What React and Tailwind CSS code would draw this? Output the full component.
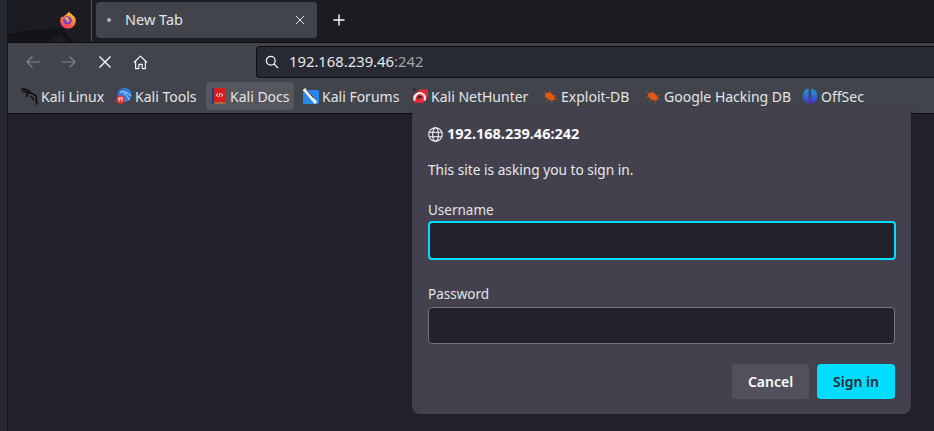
import React from "react";

const font = { fontFamily: '"Noto Sans", sans-serif' };

function Globe() {
  return (
    <svg width="15" height="15" viewBox="0 0 16 16" fill="none" stroke="#fbfbfe" strokeWidth="1.1">
      <circle cx="8" cy="8" r="7.2" />
      <ellipse cx="8" cy="8" rx="3" ry="7.2" />
      <path d="M1.3 5.6h13.4M1.3 10.4h13.4" />
    </svg>
  );
}

function Firefox() {
  return (
    <svg width="16" height="18" viewBox="0 0 16 18">
      <defs>
        <linearGradient id="ff" x1="0.8" y1="0" x2="0.2" y2="1">
          <stop offset="0" stopColor="#ffd43a" />
          <stop offset="0.5" stopColor="#ff7a2e" />
          <stop offset="1" stopColor="#ff2f6e" />
        </linearGradient>
      </defs>
      <path d="M9 0.6 C9.5 2.4 11 3 12 3 C11.8 3.6 12.2 4 13 4.4 C14.8 5.6 15.8 7.6 15.8 9.8 C15.8 14.2 12.4 17.6 8 17.6 C3.6 17.6 0.2 14.2 0.2 9.8 C0.2 8 0.8 6.4 1.8 5.2 C2 5.8 2.4 6.2 2.8 6.2 C4.4 4.6 7 3.6 9 0.6 Z" fill="url(#ff)" />
      <circle cx="7.6" cy="9.4" r="4.2" fill="#6a3bd6" />
      <path d="M4.6 7.6 C5.6 6.2 8 5.8 9.6 7.2 C8.6 7.2 7.8 7.6 7.6 8.2 C9 8 9.8 8.8 9.6 10 C9 11.6 6.6 11.8 5.2 10.6 C6.6 11 7.6 10.4 7.8 9.8 C6.6 9.8 5.2 9.2 4.6 7.6 Z" fill="#ffb02e" />
    </svg>
  );
}

function KaliLinux() {
  return (
    <svg width="17" height="17" viewBox="0 0 17 17" fill="none" stroke="#08080a" strokeWidth="1.5" strokeLinecap="round" strokeLinejoin="round">
      <path d="M0.8 1.2 C4 0.8 7 2.2 9 4.4 C10.6 6 13 6.2 14.6 7.6 C16 9 14.8 11.5 15.8 16" />
      <path d="M1.6 3.6 C4 3.4 6 4.2 7.4 5.6 C6.4 6.4 5.8 7.4 5.4 8.4" />
      <path d="M9 8.8 C10.6 8.6 12.6 9.6 12.6 12.4" strokeWidth="1.1" />
    </svg>
  );
}

function KaliTools() {
  return (
    <svg width="16" height="16" viewBox="0 0 16 16" fill="none">
      <circle cx="8.6" cy="7" r="7" fill="#2f7fe0" />
      <path d="M4 4.6 C7 2.6 10 3.6 15 8 M7.5 5.4 C10 5.6 12 8.6 13 12" stroke="#cfe6ff" strokeWidth="0.9" />
      <circle cx="4.5" cy="11.5" r="4.3" fill="#e8302c" />
      <path d="M3.2 10v3.4M5.8 10v3.4M2.4 10h4.2" stroke="#fff" strokeWidth="1" />
    </svg>
  );
}

function KaliDocs() {
  return (
    <svg width="14" height="16" viewBox="0 0 14 16">
      <rect x="0" y="0" width="3" height="16" fill="#263a8a" />
      <rect x="2" y="0" width="11.5" height="14" fill="#d3201f" />
      <rect x="2" y="14" width="11.5" height="2" fill="#a5683a" />
      <path d="M5.8 5.5 L4.2 7 L5.8 8.5 M9.2 5.5 L10.8 7 L9.2 8.5 M8.2 5 L6.8 9" stroke="#fff" strokeWidth="1" fill="none" />
    </svg>
  );
}

function KaliForums() {
  return (
    <svg width="16" height="16" viewBox="0 0 16 16">
      <rect x="0" y="2" width="16" height="14" rx="1.5" fill="#2a86e8" />
      <path d="M1 1 L13 15" stroke="#f2f2f2" strokeWidth="3.2" />
      <path d="M3.4 1.6 L11 10.4" stroke="#2a2a30" strokeWidth="0.9" />
    </svg>
  );
}

function NetHunter() {
  return (
    <svg width="16" height="16" viewBox="0 0 16 16" fill="none">
      <path d="M0.5 8 L8 1.5 H16 V9 L11 15 H2.5 Z" fill="#e8293a" />
      <path d="M2.8 12.5 C1 8 6 3.6 10 5.6 C13 7 13.4 10 12.4 12.5" stroke="#f4f4f4" strokeWidth="2.1" />
      <path d="M6.2 11 C5.8 8.4 8.6 7.6 9.6 9.6" stroke="#222228" strokeWidth="1.4" />
      <path d="M0.5 1h2.5v2" stroke="#222228" strokeWidth="1" />
    </svg>
  );
}

function Bug() {
  return (
    <svg width="16" height="16" viewBox="0 0 16 16" fill="none">
      <ellipse cx="8" cy="8.5" rx="5.4" ry="3.3" transform="rotate(30 8 8.5)" fill="#e8590f" />
      <path d="M1 3 L5 6 M1 9 L6 9 M4 13.5 L7 11 M8 2.5 L9.5 5.5 M15 8 L11 8 M15.5 12 L12 10 M10 15 L9 11" stroke="#a9552a" strokeWidth="0.9" />
    </svg>
  );
}

function OffSec() {
  return (
    <svg width="16" height="17" viewBox="0 0 16 17">
      <defs>
        <linearGradient id="os" x1="0" y1="0" x2="0" y2="1">
          <stop offset="0" stopColor="#17a2c8" />
          <stop offset="1" stopColor="#4a36d8" />
        </linearGradient>
      </defs>
      <path d="M6.6 0.6 A7.6 7.6 0 0 0 6.6 15.4 Z" fill="url(#os)" />
      <path d="M9.4 0.6 A7.6 7.6 0 0 1 9.4 15.4 Z" fill="url(#os)" />
      <rect x="7.4" y="2" width="1.2" height="15" fill="#4a36d8" />
    </svg>
  );
}

const bookmarks = [
  { label: "Kali Linux", icon: <KaliLinux />, w: "w-[90px]" },
  { label: "Kali Tools", icon: <KaliTools />, w: "w-[91px]" },
  { label: "Kali Docs", icon: <KaliDocs />, w: "w-[88px]", active: true },
  { label: "Kali Forums", icon: <KaliForums />, w: "w-[105px]" },
  { label: "Kali NetHunter", icon: <NetHunter />, w: "w-[126px]" },
  { label: "Exploit-DB", icon: <Bug />, w: "w-[99px]" },
  { label: "Google Hacking DB", icon: <Bug />, w: "w-[153px]" },
  { label: "OffSec", icon: <OffSec />, w: "w-[76px]" },
];

export default function App() {
  return (
    <div className="relative flex h-[431px] w-[934px] overflow-hidden bg-[#23222b] text-[#fbfbfe]" style={font}>
      <div className="w-2 shrink-0 border-r border-[#15151a] bg-[#262830]" />
      <div className="flex min-w-0 flex-1 flex-col">
        {/* Title bar */}
        <div className="relative flex h-[42px] shrink-0 items-start bg-[#1b1c21]">
          <svg className="absolute left-0 top-0" width="84" height="42" viewBox="0 0 84 42">
            <path d="M0 34 C20 30 40 29 54 28 L66 42 H0 Z" fill="#131317" />
            <path d="M40 42 L52 34 L60 42 Z" fill="#1b1c21" />
          </svg>
          <div className="relative flex h-[41px] w-[84px] shrink-0 items-center justify-center border-r border-[#55565c] pl-[36px] pb-[2px]">
            <Firefox />
          </div>
          <div className="ml-[4px] mt-[2px] flex h-[36px] w-[221px] items-center rounded-[4px] bg-[#42444c] pl-[11px] pr-[12px]">
            <span className="h-1 w-1 rounded-full bg-[#b5b6ba]" />
            <span className="ml-[14px] flex-1 text-[14.5px] text-[#e3e4e6]">New Tab</span>
            <svg width="10" height="10" viewBox="0 0 10 10" stroke="#e3e4e6" strokeWidth="1">
              <path d="M1 1l8 8M9 1l-8 8" />
            </svg>
          </div>
          <svg className="ml-[16px] mt-[14px]" width="12" height="12" viewBox="0 0 12 12" stroke="#fbfbfe" strokeWidth="1.4">
            <path d="M6 0.5v11M0.5 6h11" />
          </svg>
        </div>
        {/* Nav bar */}
        <div className="flex h-[38px] shrink-0 items-center border-t border-[#0e0e11] bg-[#42444c]">
          <div className="flex w-[248px] shrink-0 items-center pl-[18px] pt-[1px]">
            <svg width="14" height="14" viewBox="0 0 14 14" fill="none" stroke="#81838a" strokeWidth="1.2">
              <path d="M14 7H1M6.5 1.5L1 7L6.5 12.5" />
            </svg>
            <svg className="ml-[22px]" width="14" height="14" viewBox="0 0 14 14" fill="none" stroke="#81838a" strokeWidth="1.2">
              <path d="M0 7h13M7.5 1.5L13 7L7.5 12.5" />
            </svg>
            <svg className="ml-[23px]" width="12" height="12" viewBox="0 0 12 12" fill="none" stroke="#fbfbfe" strokeWidth="1.3">
              <path d="M0.5 0.5l11 11M11.5 0.5L0.5 11.5" />
            </svg>
            <svg className="ml-[22px]" width="15" height="15" viewBox="0 0 16 16" fill="none" stroke="#fbfbfe" strokeWidth="1.2" strokeLinejoin="round">
              <path d="M1 8L8 1.2L15 8M2.8 6.6V14.5H6.2V10H9.8V14.5H13.2V6.6" />
            </svg>
          </div>
          <div className="flex h-[32px] flex-1 items-center rounded-l-[4px] border border-r-0 border-[#0e0e11] bg-[#272933] pl-[8px]">
            <svg width="14" height="14" viewBox="0 0 16 16" fill="none" stroke="#fbfbfe" strokeWidth="1.4">
              <circle cx="6.6" cy="6.6" r="5" />
              <path d="M10.3 10.3L15 15" />
            </svg>
            <span className="ml-[10px] text-[14.8px] text-[#e8e8ea]">
              192.168.239.46<span className="text-[#a3a4a9]">:242</span>
            </span>
          </div>
        </div>
        {/* Bookmarks */}
        <div className="flex h-[34px] shrink-0 items-center gap-[4px] border-b border-[#0e0e11] bg-[#42444c] pl-[9px] pb-[1px]">
          {bookmarks.map((b) => (
            <div
              key={b.label}
              className={`flex h-[28px] shrink-0 items-center gap-[3px] rounded-[4px] pl-[4px] ${b.w} ${b.active ? "bg-[#55575e]" : ""}`}
            >
              <span className="flex w-[17px] shrink-0 justify-center">{b.icon}</span>
              <span className="whitespace-nowrap text-[14px] text-[#e3e4e6]">{b.label}</span>
            </div>
          ))}
        </div>
        <div className="flex-1" />
      </div>

      {/* Auth dialog */}
      <div className="absolute left-[412px] top-[108px] flex h-[306px] w-[499px] flex-col rounded-[8px] bg-[#42414d] pl-[16px] pr-[16px] pt-[16px] shadow-[0_0_6px_rgba(0,0,0,0.15)]">
        <div className="flex h-[20px] items-center gap-[4px]">
          <Globe />
          <span className="text-[14.5px] font-bold text-[#fbfbfe]">192.168.239.46:242</span>
        </div>
        <div className="mt-[17px] text-[13.7px] leading-[18px] text-[#e8e8ea]">This site is asking you to sign in.</div>
        <label className="mt-[21px] text-[13.5px] leading-[20px] text-[#e3e4e6]">Username</label>
        <input className="mt-[1px] h-[39px] w-[468px] rounded-[4px] border-2 border-[#00ddff] bg-[#23222b] outline-none" />
        <label className="mt-[24px] text-[13.5px] leading-[20px] text-[#e3e4e6]">Password</label>
        <input className="mt-[3px] h-[37px] w-[467px] self-start rounded-[4px] border border-[#77767f] bg-[#23222b] outline-none" />
        <div className="mt-[20px] flex w-[467px] justify-end gap-[8px]">
          <button className="h-[35px] w-[77px] rounded-[4px] bg-[#52515b] text-[14px] font-semibold text-[#fbfbfe]">Cancel</button>
          <button className="h-[35px] w-[78px] rounded-[4px] bg-[#00ddff] text-[14px] font-semibold text-[#2b2a33]">Sign in</button>
        </div>
      </div>
    </div>
  );
}
